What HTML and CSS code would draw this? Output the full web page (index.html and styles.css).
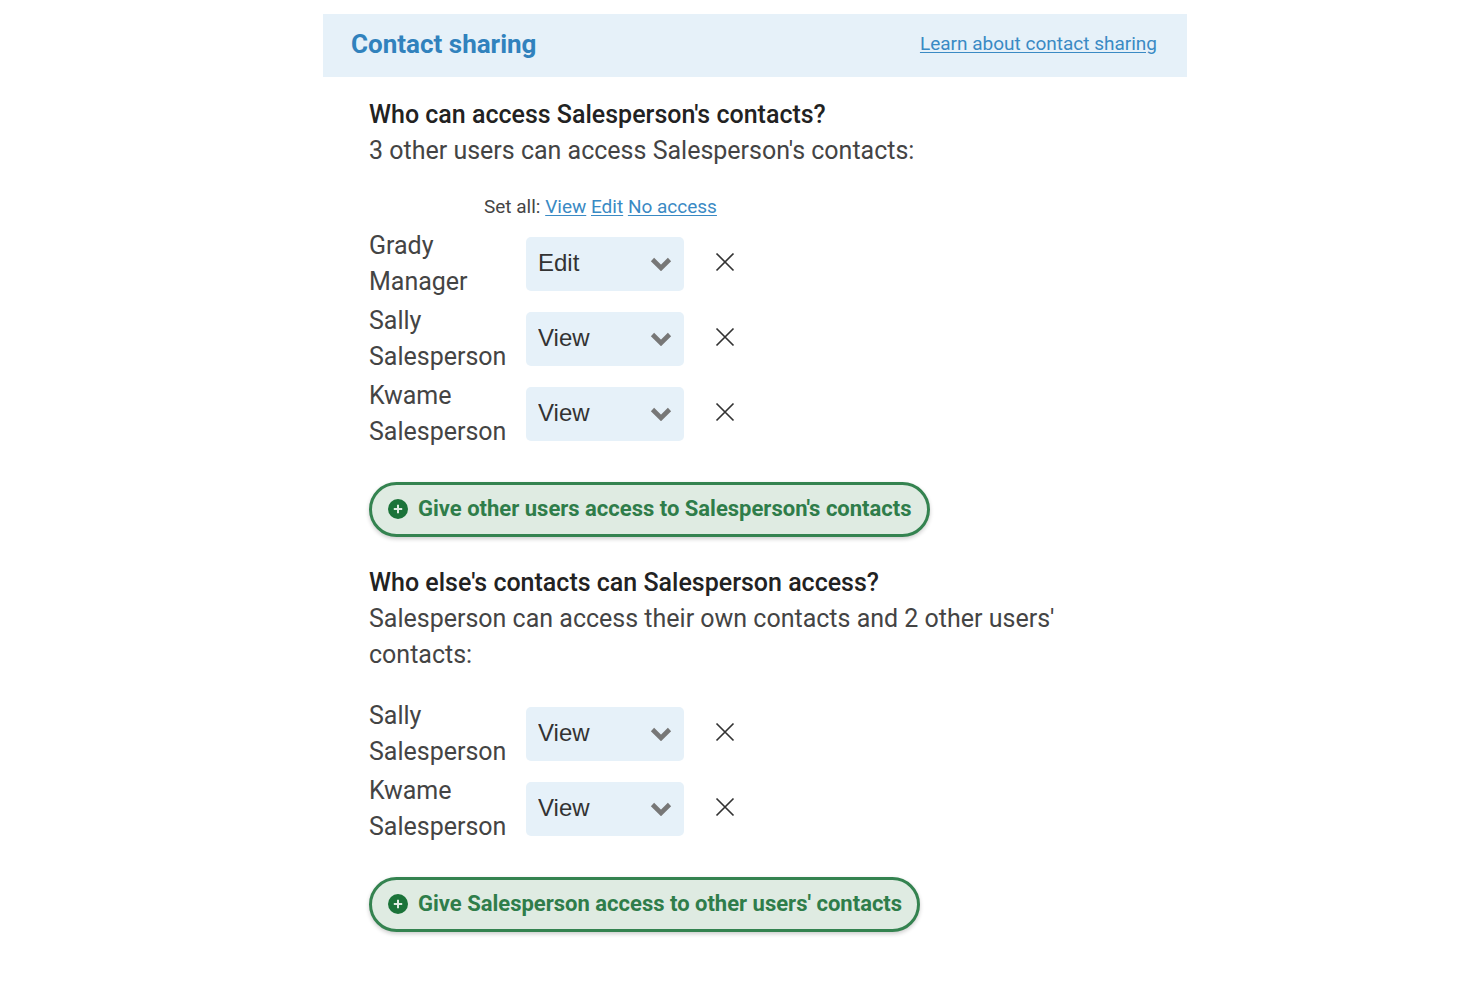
FILE: index.html
```
<!DOCTYPE html>
<html lang="en">
<head>
  <meta charset="UTF-8">
  <meta name="viewport" content="width=device-width, initial-scale=1.0">
  <title>Contact sharing</title>
  <link rel="stylesheet" href="styles.css">
</head>
<body>

  <!-- Icons -->
  <svg class="icon-defs" aria-hidden="true">
    <symbol id="icon-close" viewBox="0 0 20 20">
      <path d="M1.5 1.5 L18.5 18.5 M18.5 1.5 L1.5 18.5" fill="none" stroke="currentColor" stroke-width="1.7"/>
    </symbol>
    <symbol id="icon-chevron" viewBox="0 0 22 14">
      <path d="M2.5 2.5 L11 11 L19.5 2.5" fill="none" stroke="currentColor" stroke-width="4.6"/>
    </symbol>
    <symbol id="icon-plus" viewBox="0 0 20 20">
      <circle cx="10" cy="10" r="10" fill="currentColor"/>
      <path d="M10 5.8 V14.2 M5.8 10 H14.2" fill="none" stroke="#dfebe2" stroke-width="2"/>
    </symbol>
  </svg>

  <main class="panel">
    <header class="panel-header">
      <h1>Contact sharing</h1>
      <a href="#help" class="help-link">Learn about contact sharing</a>
    </header>

    <div class="panel-body">
      <!-- Who can access these contacts -->
      <section class="access-section">
        <h2>Who can access Salesperson's contacts?</h2>
        <p>3 other users can access Salesperson's contacts:</p>
        <div class="set-all">
          Set all: <a href="#view">View</a> <a href="#edit">Edit</a> <a href="#none">No access</a>
        </div>
        <div class="user-list">
          <div class="user-row">
            <label for="gradyAccess">Grady Manager</label>
            <div class="select-box">
              <select id="gradyAccess">
                <option>View</option>
                <option selected>Edit</option>
              </select>
              <svg class="chevron"><use href="#icon-chevron"/></svg>
            </div>
            <button type="button" class="remove-btn" aria-label="Remove Grady Manager"><svg><use href="#icon-close"/></svg></button>
          </div>
          <div class="user-row">
            <label for="sallyAccess">Sally Salesperson</label>
            <div class="select-box">
              <select id="sallyAccess">
                <option selected>View</option>
                <option>Edit</option>
              </select>
              <svg class="chevron"><use href="#icon-chevron"/></svg>
            </div>
            <button type="button" class="remove-btn" aria-label="Remove Sally Salesperson"><svg><use href="#icon-close"/></svg></button>
          </div>
          <div class="user-row">
            <label for="kwameAccess">Kwame Salesperson</label>
            <div class="select-box">
              <select id="kwameAccess">
                <option selected>View</option>
                <option>Edit</option>
              </select>
              <svg class="chevron"><use href="#icon-chevron"/></svg>
            </div>
            <button type="button" class="remove-btn" aria-label="Remove Kwame Salesperson"><svg><use href="#icon-close"/></svg></button>
          </div>
        </div>
        <button type="button" class="add-btn"><svg><use href="#icon-plus"/></svg>Give other users access to Salesperson's contacts</button>
      </section>

      <!-- Whose contacts can be accessed -->
      <section class="access-section">
        <h2>Who else's contacts can Salesperson access?</h2>
        <p>Salesperson can access their own contacts and 2 other users' contacts:</p>
        <div class="user-list spaced">
          <div class="user-row">
            <label for="sallyContacts">Sally Salesperson</label>
            <div class="select-box">
              <select id="sallyContacts">
                <option selected>View</option>
                <option>Edit</option>
              </select>
              <svg class="chevron"><use href="#icon-chevron"/></svg>
            </div>
            <button type="button" class="remove-btn" aria-label="Remove Sally Salesperson"><svg><use href="#icon-close"/></svg></button>
          </div>
          <div class="user-row">
            <label for="kwameContacts">Kwame Salesperson</label>
            <div class="select-box">
              <select id="kwameContacts">
                <option selected>View</option>
                <option>Edit</option>
              </select>
              <svg class="chevron"><use href="#icon-chevron"/></svg>
            </div>
            <button type="button" class="remove-btn" aria-label="Remove Kwame Salesperson"><svg><use href="#icon-close"/></svg></button>
          </div>
        </div>
        <button type="button" class="add-btn"><svg><use href="#icon-plus"/></svg>Give Salesperson access to other users' contacts</button>
      </section>
    </div>
  </main>

</body>
</html>
```
FILE: styles.css
```
* {
  box-sizing: border-box;
}

body {
  margin: 0;
  padding: 14px 0 14px 30px;
  background: #fff;
  color: #444;
  font-family: Roboto, "Liberation Sans", sans-serif;
  font-size: 25px;
  line-height: 36px;
}

a {
  color: #3a8ac4;
  text-underline-offset: 2px;
}

.icon-defs {
  display: none;
}

.panel {
  max-width: 864px;
  margin: 0 auto;
}

.panel-header {
  display: flex;
  justify-content: space-between;
  align-items: center;
  padding: 12px 30px 15px 28px;
  background: #e6f1f9;
}

.panel-header h1 {
  margin: 0;
  font-size: 26px;
  font-weight: 700;
  color: #3182bd;
}

.help-link {
  font-size: 19px;
}

.panel-body {
  display: flex;
  flex-direction: column;
  gap: 28px;
  padding: 20px 46px;
}

.access-section h2 {
  margin: 0;
  font-size: 25px;
  font-weight: 500;
  color: #222;
}

.access-section p {
  margin: 0;
}

.set-all {
  margin: 26px 0 9px 115px;
  font-size: 19px;
  line-height: 24px;
}

.user-list {
  display: flex;
  flex-direction: column;
  gap: 3px;
  margin-bottom: 32px;
}

.user-list.spaced {
  margin-top: 25px;
}

.user-row {
  display: grid;
  grid-template-columns: 137px 158px 20px;
  column-gap: 20px;
  align-items: center;
}

.select-box {
  display: grid;
  align-items: center;
}

.select-box select,
.select-box .chevron {
  grid-area: 1 / 1;
}

.select-box select {
  appearance: none;
  width: 100%;
  height: 54px;
  padding: 0 12px 3px;
  border: none;
  border-radius: 5px;
  background: #e6f1f9;
  color: #333;
  font-family: "Liberation Sans", Arial, sans-serif;
  font-size: 24px;
}

.select-box .chevron {
  justify-self: end;
  width: 22px;
  height: 14px;
  margin-right: 12px;
  color: #777;
  pointer-events: none;
}

.remove-btn {
  display: flex;
  width: 20px;
  margin: 0 0 4px 11px;
  padding: 0;
  border: none;
  background: none;
  color: #333;
  cursor: pointer;
}

.remove-btn svg {
  width: 20px;
  height: 20px;
}

.add-btn {
  display: flex;
  align-items: center;
  gap: 10px;
  height: 55px;
  padding: 0 15px 2px 16px;
  border: 3px solid #348350;
  border-radius: 28px;
  background: #dfebe2;
  box-shadow: 0 2px 4px rgba(0, 0, 0, 0.2);
  color: #2f7d4a;
  font-family: inherit;
  font-size: 22px;
  font-weight: 700;
  cursor: pointer;
}

.add-btn svg {
  width: 20px;
  height: 20px;
  color: #1b7339;
}
```
